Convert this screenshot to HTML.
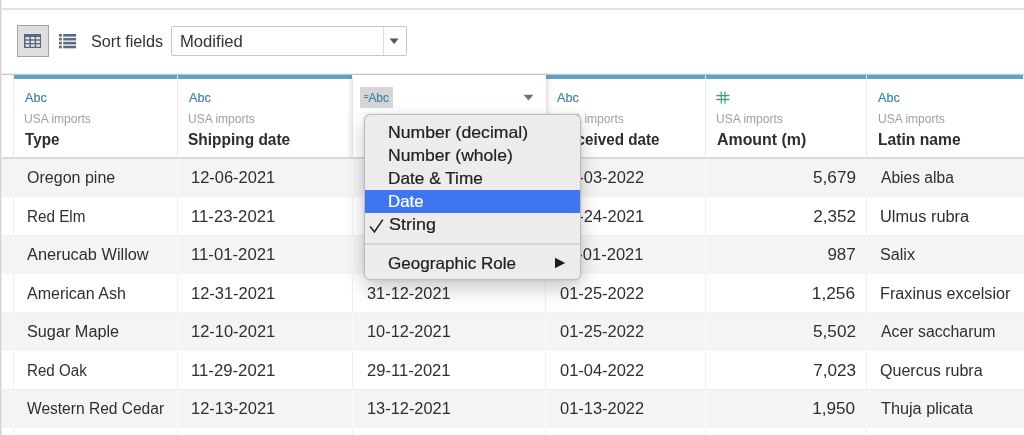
<!DOCTYPE html>
<html><head><meta charset="utf-8"><title>Fields</title>
<style>
*{box-sizing:border-box;margin:0;padding:0}
html,body{width:1024px;height:435px;overflow:hidden;background:#fff;font-family:"Liberation Sans",sans-serif;color:#333}
#root{position:relative;width:1024px;height:435px;overflow:hidden;will-change:transform}
.abs{position:absolute}
.lborder{left:0;top:0;width:2px;height:435px;background:linear-gradient(90deg,#d3d3d3 0,#d3d3d3 1px,#ebebeb 1px,#ebebeb 2px)}
.topline{left:0;top:8px;width:1024px;height:2px;background:#e3e3e3}
.btn1{left:17px;top:25px;width:32px;height:32px;background:#dedede;border:1px solid #a3a3a3}
.sortlbl{left:91px;top:32px;font-size:16px;line-height:20px;color:#333;white-space:nowrap}
.select{left:171px;top:26px;width:236px;height:30px;border:1px solid #c6c6c6;border-radius:2px;background:#fff}
.select .txt{position:absolute;left:9px;top:5px;font-size:16px;line-height:20px;color:#333;white-space:nowrap}
.select .sep{position:absolute;left:211px;top:0;width:1px;height:28px;background:#dcdcdc}
.hline{left:1px;top:73px;width:1023px;height:2px;background:linear-gradient(180deg,#efefef 0,#efefef 1px,#c4c4c4 1px,#c4c4c4 2px)}
.strip{left:2px;top:75px;width:12px;height:82px;background:#fff}
.col{position:absolute;top:75px;height:82px;background:#fff;border-left:1px solid #e9e9e9}
.col .bar{position:absolute;left:0;top:0;right:1px;height:4px;background:#60a3c5;box-shadow:1px 0 0 #fff}
.col .ty{position:absolute;left:10px;top:15px;font-size:13px;line-height:16px;color:#3f84a5;-webkit-text-stroke:.2px #3f84a5;white-space:nowrap}
.col .src{position:absolute;left:10px;top:36px;font-size:12.8px;line-height:16px;color:#a0a0a0;white-space:nowrap}
.col .nm{position:absolute;left:10px;top:54px;font-size:16.2px;line-height:20px;font-weight:bold;color:#2e2e2e;white-space:nowrap}
.hbot{left:1px;top:157px;width:1023px;height:2px;background:#d8d8d8}
.row{position:absolute;left:2px;width:1022px;background:#fff}
.row.g{background:#f4f4f4}
.row .sp{position:absolute;top:0;bottom:0;width:1px;background:#f0f0f0}
.row.g .sp{background:#fafafa}
.row .bl{position:absolute;left:0;right:0;bottom:0;height:1px;background:#f0f0f0}
.row.g .bl{background:#f4f4f4}
.cell{position:absolute;top:0.9px;height:38px;line-height:38px;font-size:16px;color:#2f2f2f;white-space:nowrap}
.shadowclip{left:330px;top:75px;width:240px;height:82px;overflow:hidden}
.selcol{position:absolute;left:23px;top:0;width:193px;height:100px;background:#fff;box-shadow:0 0 7px rgba(0,0,0,.22)}
.menu{left:364px;top:114px;width:217px;height:166px;background:#ececec;border-radius:6px;border:1px solid #bdbdbd;box-shadow:0 8px 20px rgba(0,0,0,.22),0 0 3px rgba(0,0,0,.12)}
.mi{position:absolute;left:0;width:215px;height:23px;line-height:23px;font-size:16.5px;color:#222;-webkit-text-stroke:.22px currentColor;padding-left:23px;white-space:nowrap}
.mi span{display:inline-block}
.mi.sel{background:#3f76ef;color:#fff}
.msep{position:absolute;left:0;top:128px;width:215px;height:2px;background:#d4d4d4}
</style></head><body>
<div id="root">
<div class="abs topline"></div>
<div class="abs btn1"></div>
<svg class="abs" style="left:24px;top:34px" width="17" height="14" viewBox="0 0 17 14"><rect x="0" y="0" width="17" height="14" fill="#5a6882"/><g fill="#e6e6e6"><rect x="1.6" y="3.0" width="3.8" height="2.3"/><rect x="6.9" y="3.0" width="3.8" height="2.3"/><rect x="12.1" y="3.0" width="3.8" height="2.3"/><rect x="1.6" y="6.7" width="3.8" height="2.3"/><rect x="6.9" y="6.7" width="3.8" height="2.3"/><rect x="12.1" y="6.7" width="3.8" height="2.3"/><rect x="1.6" y="10.4" width="3.8" height="2.3"/><rect x="6.9" y="10.4" width="3.8" height="2.3"/><rect x="12.1" y="10.4" width="3.8" height="2.3"/></g></svg>
<svg class="abs" style="left:59px;top:34px" width="18" height="15" viewBox="0 0 18 15"><g fill="#5a6882"><rect x="0" y="0" width="2.8" height="2.6"/><rect x="4.2" y="0" width="12.9" height="2.6"/><rect x="0" y="3.9" width="2.8" height="2.6"/><rect x="4.2" y="3.9" width="12.9" height="2.6"/><rect x="0" y="7.8" width="2.8" height="2.6"/><rect x="4.2" y="7.8" width="12.9" height="2.6"/><rect x="0" y="11.7" width="2.8" height="2.6"/><rect x="4.2" y="11.7" width="12.9" height="2.6"/></g></svg>
<div class="abs sortlbl" id="t_sort" style="left:90.81px;transform:scaleX(1.0130);transform-origin:left center;">Sort fields</div>
<div class="abs select"><div class="txt" id="t_mod" style="left:8.17px;transform:scaleX(1.0387);transform-origin:left center;">Modified</div><div class="sep"></div><svg style="position:absolute;left:217px;top:11px" width="11" height="7" viewBox="0 0 11 7"><polygon points="0.6,0.6 9.6,0.6 5.1,6" fill="#555"/></svg></div>
<div class="abs hline"></div><div class="abs strip"></div>
<div class="col" style="left:13px;width:165px"><div class="bar"></div><div class="ty" id="y0" style="left:10.94px;transform:scaleX(0.9679);transform-origin:left center;">Abc</div><div class="src" id="s0" style="left:9.79px;transform:scaleX(0.9398);transform-origin:left center;">USA imports</div><div class="nm" id="h0" style="left:10.67px;transform:scaleX(0.9404);transform-origin:left center;">Type</div></div>
<div class="col" style="left:177px;width:176px"><div class="bar"></div><div class="ty" id="y1" style="left:10.94px;transform:scaleX(0.9679);transform-origin:left center;">Abc</div><div class="src" id="s1" style="left:9.85px;transform:scaleX(0.9398);transform-origin:left center;">USA imports</div><div class="nm" id="h1" style="left:10.17px;transform:scaleX(0.9549);transform-origin:left center;">Shipping date</div></div>
<div class="col" style="left:545px;width:161px"><div class="bar"></div><div class="ty" id="y3" style="left:11.34px;transform:scaleX(0.9679);transform-origin:left center;">Abc</div><div class="src" id="s3" style="left:10.85px;transform:scaleX(0.9398);transform-origin:left center;">USA imports</div><div class="nm" id="h3" style="left:10.85px;transform:scaleX(0.9417);transform-origin:left center;">Received date</div></div>
<div class="col" style="left:705px;width:162px"><div class="bar"></div><svg style="position:absolute;left:10.2px;top:16px" width="14" height="13" viewBox="0 0 14 13"><g stroke-width="1.4"><line x1="5.3" y1="0.4" x2="5.3" y2="12.7" stroke="#5cb391"/><line x1="9" y1="0.4" x2="9" y2="12.7" stroke="#5cb391"/><line x1="0.4" y1="4.6" x2="13.4" y2="4.6" stroke="#3b9d7a"/><line x1="0.4" y1="8.5" x2="13.4" y2="8.5" stroke="#3b9d7a"/></g></svg><div class="src" id="s4" style="left:9.85px;transform:scaleX(0.9398);transform-origin:left center;">USA imports</div><div class="nm" id="h4" style="left:10.82px;transform:scaleX(0.9828);transform-origin:left center;">Amount (m)</div></div>
<div class="col" style="left:866px;width:157.5px"><div class="bar"></div><div class="ty" id="y5" style="left:11.28px;transform:scaleX(0.9679);transform-origin:left center;">Abc</div><div class="src" id="s5" style="left:10.65px;transform:scaleX(0.9398);transform-origin:left center;">USA imports</div><div class="nm" id="h5" style="left:10.85px;transform:scaleX(0.9679);transform-origin:left center;">Latin name</div></div>
<div class="abs hbot"></div>
<div class="row g" style="top:158.5px;height:38.50px"><div class="sp" style="left:11px"></div><div class="sp" style="left:175px"></div><div class="sp" style="left:350px"></div><div class="sp" style="left:543px"></div><div class="sp" style="left:703px"></div><div class="sp" style="left:864px"></div><div class="sp" style="left:1021.5px"></div><div class="bl"></div><div class="cell" id="c0_0" style="left:25.15px;transform:scaleX(1.0018);transform-origin:left center;">Oregon pine</div><div class="cell" id="c0_1" style="left:188.67px;transform:scaleX(1.0290);transform-origin:left center;">12-06-2021</div><div class="cell" id="c0_2" style="left:365.28px;transform:scaleX(1.0164);transform-origin:left center;">06-12-2021</div><div class="cell" id="c0_3" style="left:557.79px;transform:scaleX(1.0281);transform-origin:left center;">01-03-2022</div><div class="cell" id="c0_4" style="right:168.33px;transform:scaleX(1.0739);transform-origin:right center;">5,679</div><div class="cell" id="c0_5" style="left:879.08px;transform:scaleX(0.9750);transform-origin:left center;">Abies alba</div></div>
<div class="row" style="top:197.0px;height:38.50px"><div class="sp" style="left:11px"></div><div class="sp" style="left:175px"></div><div class="sp" style="left:350px"></div><div class="sp" style="left:543px"></div><div class="sp" style="left:703px"></div><div class="sp" style="left:864px"></div><div class="sp" style="left:1021.5px"></div><div class="bl"></div><div class="cell" id="c1_0" style="left:25.12px;transform:scaleX(0.9529);transform-origin:left center;">Red Elm</div><div class="cell" id="c1_1" style="left:188.61px;transform:scaleX(1.0449);transform-origin:left center;">11-23-2021</div><div class="cell" id="c1_2" style="left:364.79px;transform:scaleX(1.0358);transform-origin:left center;">23-11-2021</div><div class="cell" id="c1_3" style="left:557.79px;transform:scaleX(1.0275);transform-origin:left center;">01-24-2021</div><div class="cell" id="c1_4" style="right:168.09px;transform:scaleX(1.0693);transform-origin:right center;">2,352</div><div class="cell" id="c1_5" style="left:878.08px;transform:scaleX(1.0231);transform-origin:left center;">Ulmus rubra</div></div>
<div class="row g" style="top:235.5px;height:38.50px"><div class="sp" style="left:11px"></div><div class="sp" style="left:175px"></div><div class="sp" style="left:350px"></div><div class="sp" style="left:543px"></div><div class="sp" style="left:703px"></div><div class="sp" style="left:864px"></div><div class="sp" style="left:1021.5px"></div><div class="bl"></div><div class="cell" id="c2_0" style="left:25.22px;transform:scaleX(1.0210);transform-origin:left center;">Anerucab Willow</div><div class="cell" id="c2_1" style="left:188.96px;transform:scaleX(1.0450);transform-origin:left center;">11-01-2021</div><div class="cell" id="c2_2" style="left:365.24px;transform:scaleX(1.0311);transform-origin:left center;">01-11-2021</div><div class="cell" id="c2_3" style="left:557.06px;transform:scaleX(1.0323);transform-origin:left center;">12-01-2021</div><div class="cell" id="c2_4" style="right:168.50px;transform:scaleX(1.0604);transform-origin:right center;">987</div><div class="cell" id="c2_5" style="left:878.12px;transform:scaleX(1.0101);transform-origin:left center;">Salix</div></div>
<div class="row" style="top:274.0px;height:38.50px"><div class="sp" style="left:11px"></div><div class="sp" style="left:175px"></div><div class="sp" style="left:350px"></div><div class="sp" style="left:543px"></div><div class="sp" style="left:703px"></div><div class="sp" style="left:864px"></div><div class="sp" style="left:1021.5px"></div><div class="bl"></div><div class="cell" id="c3_0" style="left:25.06px;transform:scaleX(1.0011);transform-origin:left center;">American Ash</div><div class="cell" id="c3_1" style="left:188.67px;transform:scaleX(1.0290);transform-origin:left center;">12-31-2021</div><div class="cell" id="c3_2" style="left:364.59px;transform:scaleX(1.0219);transform-origin:left center;">31-12-2021</div><div class="cell" id="c3_3" style="left:557.79px;transform:scaleX(1.0282);transform-origin:left center;">01-25-2022</div><div class="cell" id="c3_4" style="right:168.52px;transform:scaleX(1.0783);transform-origin:right center;">1,256</div><div class="cell" id="c3_5" style="left:878.14px;transform:scaleX(1.0118);transform-origin:left center;">Fraxinus excelsior</div></div>
<div class="row g" style="top:312.5px;height:38.50px"><div class="sp" style="left:11px"></div><div class="sp" style="left:175px"></div><div class="sp" style="left:350px"></div><div class="sp" style="left:543px"></div><div class="sp" style="left:703px"></div><div class="sp" style="left:864px"></div><div class="sp" style="left:1021.5px"></div><div class="bl"></div><div class="cell" id="c4_0" style="left:24.62px;transform:scaleX(1.0155);transform-origin:left center;">Sugar Maple</div><div class="cell" id="c4_1" style="left:188.67px;transform:scaleX(1.0290);transform-origin:left center;">12-10-2021</div><div class="cell" id="c4_2" style="left:364.95px;transform:scaleX(1.0237);transform-origin:left center;">10-12-2021</div><div class="cell" id="c4_3" style="left:557.79px;transform:scaleX(1.0281);transform-origin:left center;">01-25-2022</div><div class="cell" id="c4_4" style="right:168.33px;transform:scaleX(1.0740);transform-origin:right center;">5,502</div><div class="cell" id="c4_5" style="left:879.08px;transform:scaleX(0.9899);transform-origin:left center;">Acer saccharum</div></div>
<div class="row" style="top:351.0px;height:38.50px"><div class="sp" style="left:11px"></div><div class="sp" style="left:175px"></div><div class="sp" style="left:350px"></div><div class="sp" style="left:543px"></div><div class="sp" style="left:703px"></div><div class="sp" style="left:864px"></div><div class="sp" style="left:1021.5px"></div><div class="bl"></div><div class="cell" id="c5_0" style="left:25.00px;transform:scaleX(0.9465);transform-origin:left center;">Red Oak</div><div class="cell" id="c5_1" style="left:188.61px;transform:scaleX(1.0449);transform-origin:left center;">11-29-2021</div><div class="cell" id="c5_2" style="left:364.79px;transform:scaleX(1.0358);transform-origin:left center;">29-11-2021</div><div class="cell" id="c5_3" style="left:557.79px;transform:scaleX(1.0282);transform-origin:left center;">01-04-2022</div><div class="cell" id="c5_4" style="right:168.09px;transform:scaleX(1.0699);transform-origin:right center;">7,023</div><div class="cell" id="c5_5" style="left:878.09px;transform:scaleX(1.0037);transform-origin:left center;">Quercus rubra</div></div>
<div class="row g" style="top:389.5px;height:38.50px"><div class="sp" style="left:11px"></div><div class="sp" style="left:175px"></div><div class="sp" style="left:350px"></div><div class="sp" style="left:543px"></div><div class="sp" style="left:703px"></div><div class="sp" style="left:864px"></div><div class="sp" style="left:1021.5px"></div><div class="bl"></div><div class="cell" id="c6_0" style="left:25.08px;transform:scaleX(0.9714);transform-origin:left center;">Western Red Cedar</div><div class="cell" id="c6_1" style="left:188.67px;transform:scaleX(1.0290);transform-origin:left center;">12-13-2021</div><div class="cell" id="c6_2" style="left:364.95px;transform:scaleX(1.0237);transform-origin:left center;">13-12-2021</div><div class="cell" id="c6_3" style="left:557.79px;transform:scaleX(1.0281);transform-origin:left center;">01-13-2022</div><div class="cell" id="c6_4" style="right:168.69px;transform:scaleX(1.0696);transform-origin:right center;">1,950</div><div class="cell" id="c6_5" style="left:879.02px;transform:scaleX(1.0156);transform-origin:left center;">Thuja plicata</div></div>
<div class="row" style="top:428.0px;height:38.50px"><div class="sp" style="left:11px"></div><div class="sp" style="left:175px"></div><div class="sp" style="left:350px"></div><div class="sp" style="left:543px"></div><div class="sp" style="left:703px"></div><div class="sp" style="left:864px"></div><div class="sp" style="left:1021.5px"></div><div class="bl"></div></div>
<div class="abs shadowclip"><div class="selcol"></div></div>
<div class="abs" style="left:360px;top:87px;width:33px;height:21px;background:#d6d6d6"></div>
<div class="abs" id="t_eq" style="left:364.30px;top:90.8px;font-size:12.6px;line-height:14px;color:#3f84a5;-webkit-text-stroke:.2px #3f84a5;white-space:nowrap;transform:scaleX(0.9450);transform-origin:left center;"><span style="font-size:8px;font-weight:bold;position:relative;top:-2.4px">=</span>Abc</div>
<div class="abs src" style="left:365px;top:112px;font-size:11.7px;line-height:14px;color:#a0a0a0">USA imports</div>
<div class="abs" style="left:365px;top:130px;font-size:15.5px;line-height:18px;font-weight:bold;color:#2e2e2e">Date</div>
<svg class="abs" style="left:523px;top:94px" width="11" height="7" viewBox="0 0 11 7"><polygon points="0.6,0.7 10.4,0.7 5.5,6.5" fill="#68718a"/></svg>
<div class="abs lborder"></div>
<div class="abs menu"><div class="mi" style="top:6px;padding-left:22.90px"><span id="m0" style="transform:scaleX(1.0687);transform-origin:left center;">Number (decimal)</span></div><div class="mi" style="top:29px;padding-left:22.90px"><span id="m1" style="transform:scaleX(1.0638);transform-origin:left center;">Number (whole)</span></div><div class="mi" style="top:52px;padding-left:23.22px"><span id="m2" style="transform:scaleX(1.0445);transform-origin:left center;">Date &amp; Time</span></div><div class="mi sel" style="top:75px;padding-left:23.42px"><span id="m3" style="transform:scaleX(1.0198);transform-origin:left center;">Date</span></div><div class="mi" style="top:98px;padding-left:23.59px"><span id="m4" style="transform:scaleX(1.0872);transform-origin:left center;">String</span></div><div class="mi" style="top:137px;padding-left:23.39px"><span id="m5" style="transform:scaleX(1.0345);transform-origin:left center;">Geographic Role</span></div><div class="msep"></div><svg style="position:absolute;left:4px;top:103px" width="16" height="16" viewBox="0 0 16 16"><polyline points="1.2,8.6 5.4,14 13.8,1.6" fill="none" stroke="#222" stroke-width="1.6" stroke-linejoin="miter"/></svg><svg style="position:absolute;left:189px;top:142px" width="12" height="12" viewBox="0 0 12 12"><polygon points="1,0.8 11.2,6 1,11.2" fill="#1e1e1e"/></svg></div>
</div>
</body></html>
